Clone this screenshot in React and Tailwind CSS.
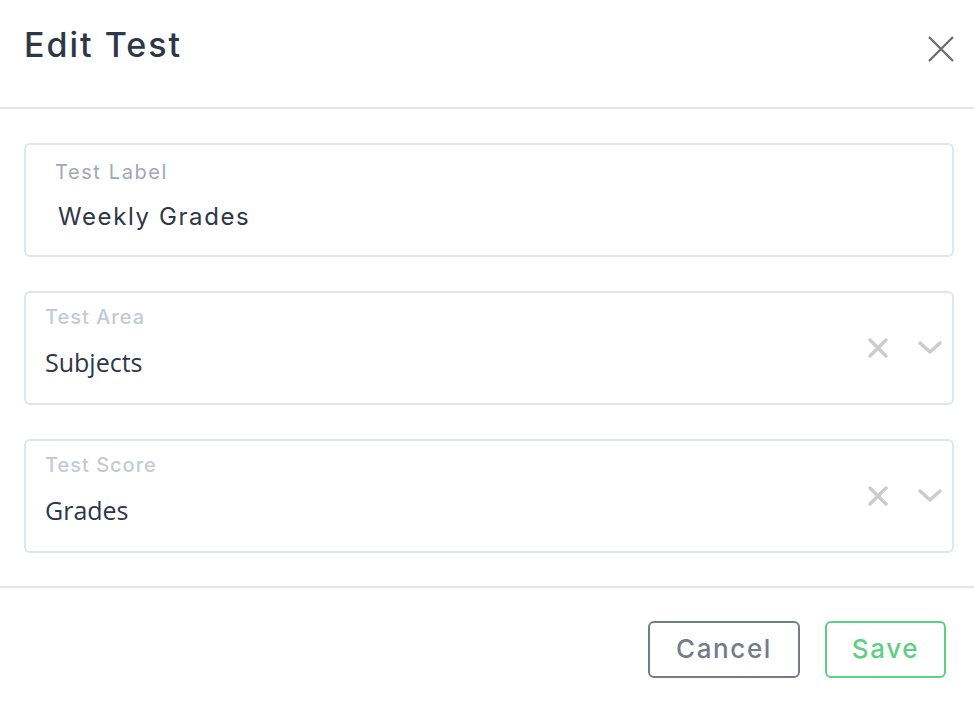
import React from "react";

const poppins = { fontFamily: '"Inter", "Noto Sans", sans-serif' };

const ClearIcon = () => (
  <svg width="20" height="20" viewBox="0 0 20 20" fill="none">
    <path d="M2 2 L18 18 M18 2 L2 18" stroke="#cccccc" strokeWidth="3.4" strokeLinecap="round" />
  </svg>
);

const ChevronIcon = () => (
  <svg width="24" height="14" viewBox="0 0 24 14" fill="none">
    <path d="M2 2 L12 11 L22 2" stroke="#cccccc" strokeWidth="3.4" strokeLinecap="round" strokeLinejoin="round" />
  </svg>
);

const SelectField = ({ label, value }) => (
  <div className="h-[114px] rounded-md border-2 border-[#dfe6f0] flex items-center pl-[19px] pr-[10px]">
    <div className="flex-1 flex flex-col h-full pt-[11px]">
      <span className="text-[20px] leading-[26px] font-medium text-[#c3cad8] tracking-[1px]">{label}</span>
      <span className="mt-[17px] text-[25px] leading-[30px] text-[#2d3748] font-['Open_Sans',sans-serif]">{value}</span>
    </div>
    <div className="flex items-center gap-[30px]">
      <ClearIcon />
      <ChevronIcon />
    </div>
  </div>
);

export default function App() {
  return (
    <div className="w-[974px] h-[702px] bg-white flex flex-col" style={poppins}>
      <div className="h-[109px] border-b-2 border-[#dfe6f0] flex items-center justify-between pl-[24px] pr-[18px] pb-[18px]">
        <h2 className="text-[34px] font-medium text-[#2d3748] tracking-[2px]">Edit Test</h2>
        <svg width="30" height="30" viewBox="0 0 30 30" fill="none" className="mt-[8px]">
          <path d="M3 3 L27 27 M27 3 L3 27" stroke="#6e6e6e" strokeWidth="2.4" />
        </svg>
      </div>

      <div className="flex flex-col gap-[34px] pl-[24px] pr-[20px] pt-[34px] pb-[33px] border-b-2 border-[#dfe6f0]">
        <div className="h-[114px] rounded-md border-2 border-[#dfe6f0] flex flex-col pl-[29px] pt-[14px]">
          <span className="text-[20px] leading-[26px] text-[#a0a8b6] tracking-[1.6px]">Test Label</span>
          <span className="mt-[17px] ml-[3px] text-[24px] leading-[30px] text-[#2d3748] tracking-[1.6px]">Weekly Grades</span>
        </div>
        <SelectField label="Test Area" value="Subjects" />
        <SelectField label="Test Score" value="Grades" />
      </div>

      <div className="flex justify-end gap-[25px] pt-[33px] pr-[28px]">
        <button className="w-[152px] h-[57px] pb-[2px] rounded-md border-2 border-[#737b8c] text-[26px] font-medium text-[#737b8c] tracking-[1.6px]">
          Cancel
        </button>
        <button className="w-[121px] h-[57px] pb-[2px] rounded-md border-2 border-[#5fcf82] text-[26px] font-medium text-[#5fcf82] tracking-[1.6px]">
          Save
        </button>
      </div>
    </div>
  );
}
